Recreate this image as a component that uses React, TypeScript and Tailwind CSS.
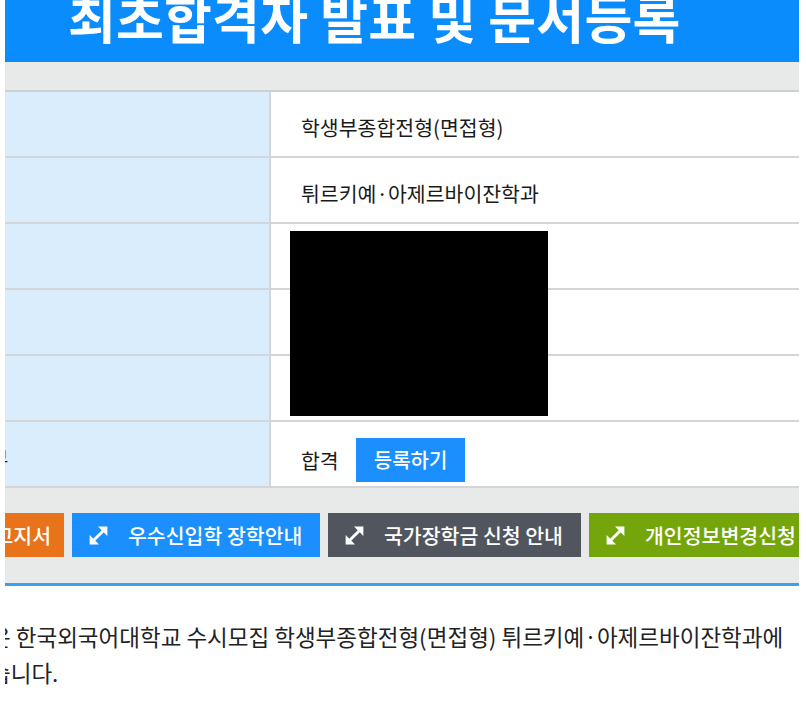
import React from "react";

const font = { fontFamily: '"Noto Sans CJK KR", "Noto Sans", sans-serif' };

function ExpandIcon() {
  return (
    <svg width="23" height="23" viewBox="0 0 22 22" className="shrink-0">
      <line x1="5" y1="17" x2="17" y2="5" stroke="white" strokeWidth="2.8" />
      <polygon points="10.5,2.5 19.5,2.5 19.5,11.5" fill="white" />
      <polygon points="2.5,10.5 2.5,19.5 11.5,19.5" fill="white" />
    </svg>
  );
}

function Row({
  left,
  children,
  pad = "pt-[7px]",
}: {
  left?: React.ReactNode;
  children?: React.ReactNode;
  pad?: string;
}) {
  return (
    <div className="flex h-[66px] border-b-2 border-[#d3d6d8]">
      <div className="w-[266px] shrink-0 bg-[#d9edfd] border-r-2 border-[#d3d6d8] flex items-center overflow-hidden">
        {left}
      </div>
      <div className={`flex-1 bg-white flex items-center pl-[30px] text-[20.5px] text-[#1a1a1a] ${pad}`}>
        {children}
      </div>
    </div>
  );
}

export default function App() {
  return (
    <div className="w-[806px] h-[702px] bg-white overflow-hidden" style={font}>
      <div className="ml-[5px] w-[794px] overflow-hidden">
        {/* header */}
        <div className="h-[62px] bg-[#0a8cfc] overflow-hidden">
          <div className="pl-[63px] mt-[-14px] text-[52px] leading-[62px] font-bold text-white whitespace-nowrap tracking-[0.2px]">
            최초합격자 발표 및 문서등록
          </div>
        </div>
        <div className="h-[30px] bg-[#e8e9e9] border-b-2 border-[#cdd1d4]" />
        {/* table */}
        <div className="relative">
          <Row>학생부종합전형(면접형)</Row>
          <Row>튀르키예·아제르바이잔학과</Row>
          <Row />
          <Row />
          <Row />
          <Row
            pad="pt-[12px]"
            left={
              <span className="ml-[-15px] mt-[10px] text-[20px] text-[#222] whitespace-nowrap">부</span>
            }
          >
            <span className="mr-[17px]">합격</span>
            <span className="h-[44px] px-[18px] bg-[#1a8ffd] text-white text-[20px] font-medium flex items-center">
              등록하기
            </span>
          </Row>
          {/* redaction overlay */}
          <div className="absolute left-[285px] top-[139px] w-[258px] h-[185px] bg-black" />
        </div>
        {/* buttons */}
        <div className="bg-[#e8e9e9] pt-[25px] h-[98px] border-b-[3px] border-[#3d9ff2]">
          <div className="flex gap-[8px] h-[44px] text-white text-[20.5px] font-medium whitespace-nowrap">
            <div className="w-[59px] shrink-0 bg-[#e8731a] flex items-center justify-end pr-[13px] overflow-hidden">
              <span>등록금고지서</span>
            </div>
            <div className="w-[248px] shrink-0 bg-[#1a8ffd] flex items-center pl-[15px] gap-[18px]">
              <ExpandIcon />
              <span>우수신입학 장학안내</span>
            </div>
            <div className="w-[253px] shrink-0 bg-[#51565e] flex items-center pl-[15px] gap-[18px]">
              <ExpandIcon />
              <span>국가장학금 신청 안내</span>
            </div>
            <div className="flex-1 min-w-0 bg-[#74a60c] flex items-center pl-[15px] gap-[18px] overflow-hidden">
              <ExpandIcon />
              <span>개인정보변경신청 안내</span>
            </div>
          </div>
        </div>
        {/* text */}
        <div className="pt-[32px] text-[22.5px] text-[#222] leading-[36px] whitespace-nowrap overflow-hidden">
          <div className="ml-[-15px]">은 한국외국어대학교 수시모집 학생부종합전형(면접형) 튀르키예·아제르바이잔학과에</div>
          <div className="ml-[-15px]">습니다.</div>
        </div>
      </div>
    </div>
  );
}
